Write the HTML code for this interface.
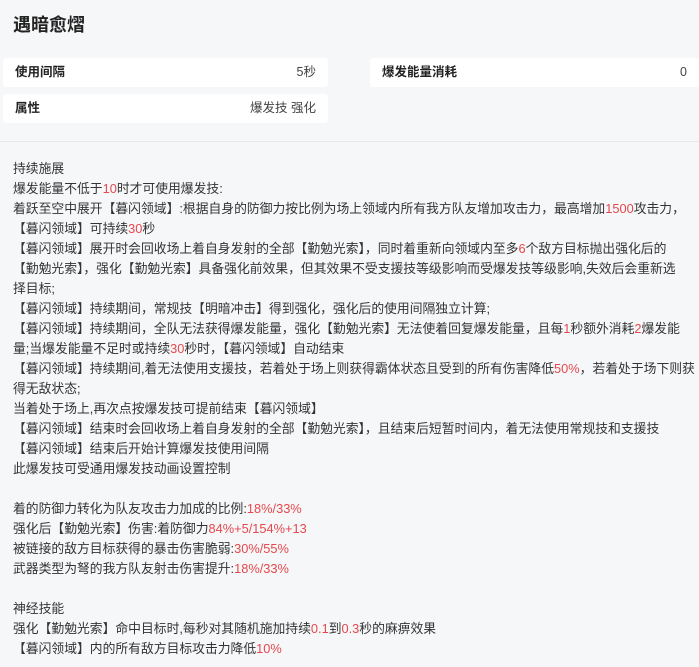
<html><head><style>
body{margin:0;background:#f6f7f9;font-family:"Liberation Sans","Noto Sans CJK SC",sans-serif;color:#333;width:699px;height:667px;overflow:hidden;position:relative}
h1{position:absolute;left:13px;top:11px;margin:0;font-size:18px;font-weight:bold;color:#222}
.c{position:absolute;background:#fff;height:29px;font-size:12.5px;line-height:29px;border-radius:3px}
.c b{position:absolute;left:12px;font-weight:bold;color:#222}
.c span{position:absolute;right:12px;color:#444}
.hr{position:absolute;left:0;right:0;top:141px;border-top:1px solid #e6e8eb}
.t{position:absolute;left:13px;top:159px;font-size:12.8px;line-height:20px;color:#333;white-space:nowrap}
.r{color:#e5484d}
</style></head><body>
<h1>遇暗愈熠</h1>
<div class="c" style="left:3px;top:58px;width:325px"><b>使用间隔</b><span>5秒</span></div>
<div class="c" style="left:370px;top:58px;width:329px"><b>爆发能量消耗</b><span>0</span></div>
<div class="c" style="left:3px;top:94px;width:325px"><b>属性</b><span>爆发技 强化</span></div>
<div class="hr"></div>
<div class="t">持续施展<br>
爆发能量不低于<span class="r">10</span>时才可使用爆发技:<br>
着跃至空中展开【暮闪领域】:根据自身的防御力按比例为场上领域内所有我方队友增加攻击力，最高增加<span class="r">1500</span>攻击力，<br>
【暮闪领域】可持续<span class="r">30</span>秒<br>
【暮闪领域】展开时会回收场上着自身发射的全部【勤勉光索】，同时着重新向领域内至多<span class="r">6</span>个敌方目标抛出强化后的<br>
【勤勉光索】，强化【勤勉光索】具备强化前效果，但其效果不受支援技等级影响而受爆发技等级影响,失效后会重新选<br>
择目标;<br>
【暮闪领域】持续期间，常规技【明暗冲击】得到强化，强化后的使用间隔独立计算;<br>
【暮闪领域】持续期间，全队无法获得爆发能量，强化【勤勉光索】无法使着回复爆发能量，且每<span class="r">1</span>秒额外消耗<span class="r">2</span>爆发能<br>
量;当爆发能量不足时或持续<span class="r">30</span>秒时，【暮闪领域】自动结束<br>
【暮闪领域】持续期间,着无法使用支援技，若着处于场上则获得霸体状态且受到的所有伤害降低<span class="r">50%</span>，若着处于场下则获<br>
得无敌状态;<br>
当着处于场上,再次点按爆发技可提前结束【暮闪领域】<br>
【暮闪领域】结束时会回收场上着自身发射的全部【勤勉光索】，且结束后短暂时间内，着无法使用常规技和支援技<br>
【暮闪领域】结束后开始计算爆发技使用间隔<br>
此爆发技可受通用爆发技动画设置控制<br>
<br>
着的防御力转化为队友攻击力加成的比例:<span class="r">18%/33%</span><br>
强化后【勤勉光索】伤害:着防御力<span class="r">84%+5/154%+13</span><br>
被链接的敌方目标获得的暴击伤害脆弱:<span class="r">30%/55%</span><br>
武器类型为弩的我方队友射击伤害提升:<span class="r">18%/33%</span><br>
<br>
神经技能<br>
强化【勤勉光索】命中目标时,每秒对其随机施加持续<span class="r">0.1</span>到<span class="r">0.3</span>秒的麻痹效果<br>
【暮闪领域】内的所有敌方目标攻击力降低<span class="r">10%</span></div>
</body></html>
